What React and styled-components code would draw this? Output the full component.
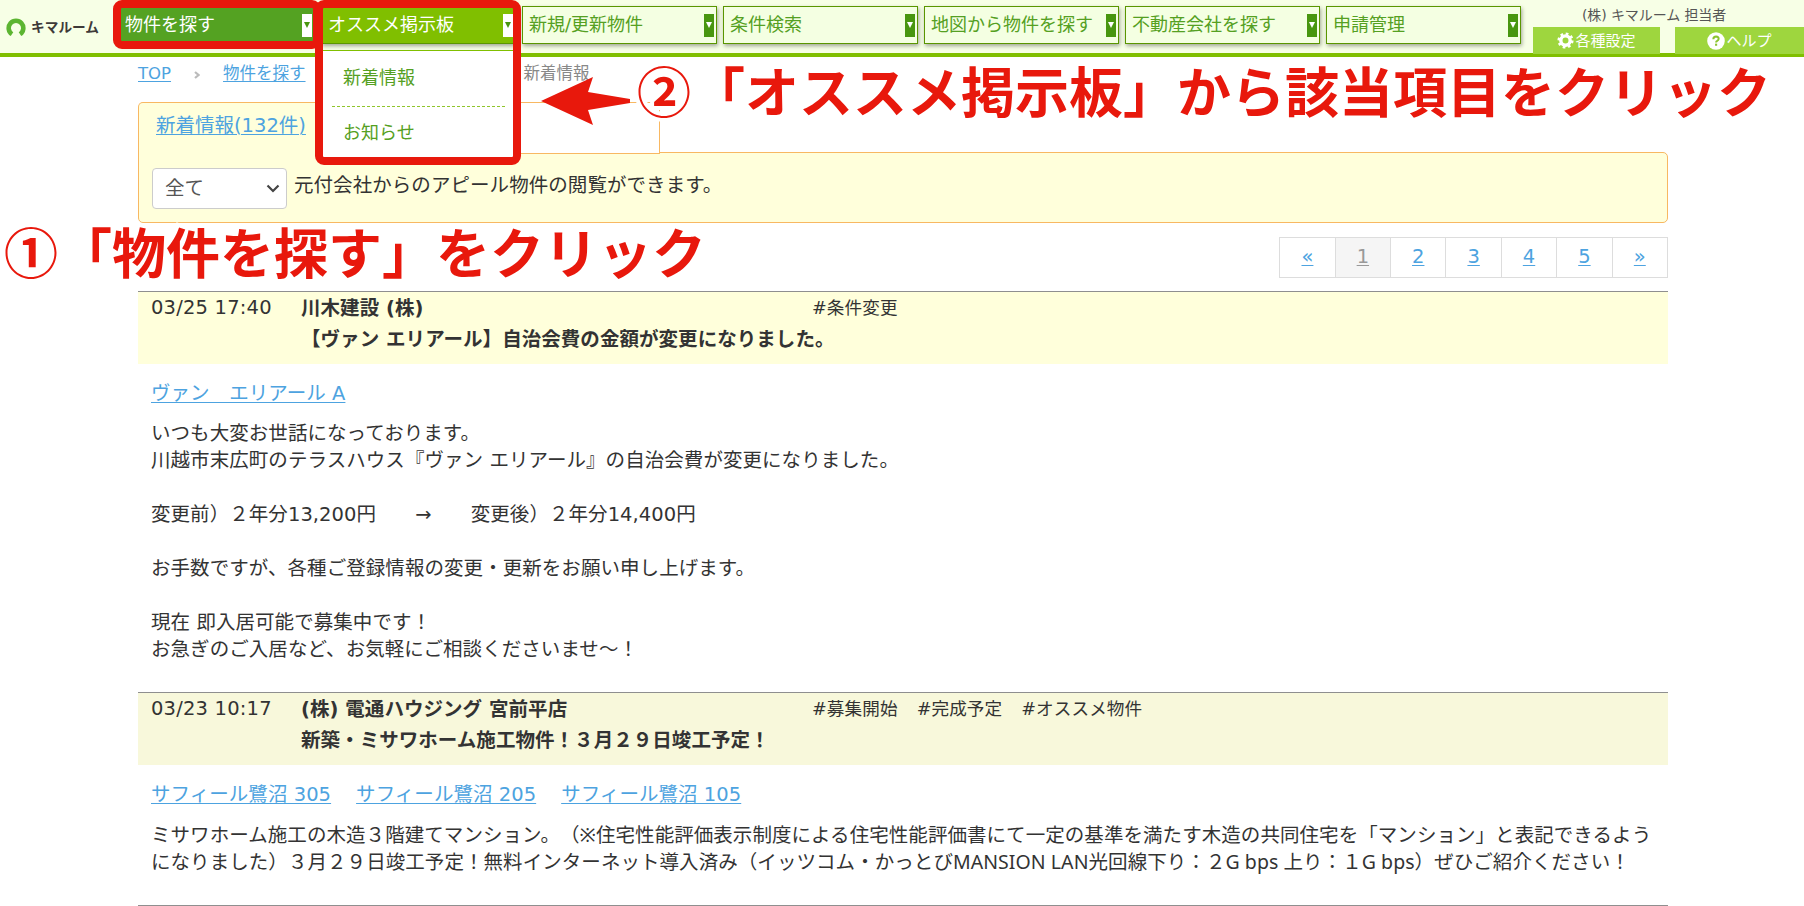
import React from "react";
import styled, { createGlobalStyle } from 'styled-components';


const GlobalStyle = createGlobalStyle`
* {
    box-sizing: border-box;
}
body {
    margin: 0;
    background-color: #fff;
    color: #333;
    font-family: 'DejaVu Sans', 'Noto Sans CJK JP', sans-serif;
    font-size: 19.5px;
    line-height: 27px;
    text-spacing-trim: space-all;
}
a {
    color: #4da3e0;
    text-decoration: underline;
    text-underline-offset: 2px;
    text-decoration-thickness: 1px;
}
p, h2, h3, ul {
    margin: 0;
    padding: 0;
}
`

const StyledPage = styled.div`
position: relative;
width: 1804px;
height: 906px;
overflow: hidden;
`

const StyledHeader = styled.header`
display: flex;
height: 57px;
background-color: #f7ffe6;
border-bottom: 4px solid #80bf00;
`

const Logo = styled.div`
display: flex;
align-items: center;
width: 120px;
height: 53px;
padding-left: 6px;

svg {
    margin-right: 5px;
}
span {
    font-family: 'Noto Sans CJK JP', sans-serif;
    font-size: 13.7px;
    font-weight: 700;
    color: #3e3a39;
}
`

const Nav = styled.nav`
display: flex;
gap: 6px;
padding-top: 6px;
`

const NavItem = styled.div`
position: relative;
display: flex;
align-items: center;
justify-content: space-between;
width: 195px;
height: 38px;
padding: 0 2px 0 6px;
border: 1px solid #5a9600;
background-color: ${props => props.$bg || '#f4ffe2'};
color: ${props => props.$bg ? '#fff' : '#55a022'};
box-shadow: 1px 2px 4px rgba(0, 0, 0, 0.35);
font-size: 18px;
white-space: nowrap;

&:first-child {
    padding-left: 4px;
}
`

const NavLabel = styled.span`
margin-top: -2px;
`

const NavArrow = styled.span`
display: flex;
align-items: center;
justify-content: center;
width: 10px;
height: 23px;
background-color: ${props => props.$open ? '#fff' : '#48960f'};

&::after {
    content: '';
    border: 3px solid transparent;
    border-top: 6px solid ${props => props.$open ? '#48960f' : '#fff'};
    border-bottom: 0;
}
`

const SubMenu = styled.ul`
position: absolute;
top: 43px;
left: 1px;
z-index: 2;
width: 193px;
height: 110px;
padding: 0 11px 0 9px;
border-top: 1px solid #80bf00;
background-color: #fff;
color: #55a022;
list-style: none;

li {
    height: 55px;
    padding-left: 11px;
    line-height: 53px;
}
li + li {
    line-height: 51px;
    border-top: 1px dashed #90c52c;
}
`

const UserArea = styled.div`
display: flex;
flex-direction: column;
width: 271px;
margin-left: 12px;
`

const UserName = styled.div`
height: 27px;
padding-left: 49px;
font-size: 14px;
letter-spacing: -0.1px;
line-height: 30px;
color: #555;
`

const UserButtons = styled.div`
display: flex;
gap: 15px;
`

const UserButton = styled.button`
display: flex;
align-items: center;
justify-content: center;
gap: 1px;
width: ${props => props.$width}px;
height: 27px;
padding: 0;
border: 0;
background-color: #9ed63e;
color: #fff;
font-family: inherit;
font-size: 15px;
line-height: 26px;
`

const Main = styled.main`
width: 1530px;
margin-left: 138px;
`

const Breadcrumb = styled.div`
display: flex;
align-items: center;
height: 45px;
padding-bottom: 13px;
font-size: 16.5px;

span {
    margin-left: 218px;
    color: #888;
}
svg {
    margin: 3px 23px 0;
}
`

const Tabs = styled.div`
display: flex;
height: 51px;
`

const Tab = styled.div`
width: ${props => props.$width}px;
height: ${props => props.$active ? 51 : 52}px;
padding: 9px 17px;
border: 1px solid #f8b862;
border-left-width: ${props => props.$active ? 1 : 0}px;
border-bottom-width: ${props => props.$active ? 0 : 1}px;
border-top-left-radius: ${props => props.$active ? 5 : 0}px;
background-color: ${props => props.$active ? '#ffffdb' : '#fff'};
position: relative;
z-index: 1;
white-space: nowrap;
`

const Panel = styled.div`
display: flex;
height: 71px;
margin-top: -1px;
padding: 15px 13px;
border: 1px solid #f8b862;
border-radius: 0 5px 5px 5px;
background-color: #ffffdb;
`

const SelectBox = styled.div`
display: flex;
align-items: center;
justify-content: space-between;
width: 135px;
height: 41px;
margin-right: 7px;
padding: 0 6px 0 12px;
border: 1px solid #ccc;
border-radius: 4px;
background-color: #fff;
color: #555;
`

const PanelText = styled.p`
padding-top: 4px;
letter-spacing: 0.06px;
`

const Pagination = styled.div`
display: flex;
justify-content: flex-end;
height: 68px;
padding-top: 14px;
`

const PageLink = styled.a`
width: 56.4px;
height: 41px;
margin-left: -1px;
border: 1px solid #ddd;
background-color: ${props => props.$current ? '#f5f5f5' : '#fff'};
color: ${props => props.$current ? '#999' : '#4da3e0'};
line-height: 37px;
text-align: center;
`

const Article = styled.article`
height: ${props => props.$height}px;
border-top: 1px solid #8f8f8f;
`

const ArticleHead = styled.div`
display: flex;
height: 72px;
padding: 1px 13px;
background-color: ${props => props.$bg};

h3 {
    width: 511px;
    font-size: 19.5px;
    font-weight: 700;
    line-height: 31px;
    letter-spacing: 0.05px;
    white-space: nowrap;
}
`

const ArticleDate = styled.div`
width: 150px;
line-height: 29px;
letter-spacing: 0.2px;
`

const Tags = styled.div`
display: flex;
gap: 19px;
font-size: 17.6px;
line-height: 31px;
letter-spacing: 0.1px;
`

const ArticleLinks = styled.div`
display: flex;
gap: 25px;
padding: 16px 13px 13px;
letter-spacing: 0.05px;
`

const ArticleText = styled.p`
padding: 0 13px;
font-family: ${props => props.$latin}, 'Noto Sans CJK JP', sans-serif;
letter-spacing: 0.06px;
white-space: pre;
`

const Note = styled.div`
position: absolute;
z-index: 4;
left: ${props => props.$x}px;
top: ${props => props.$y}px;
color: #e8180c;
font-family: 'Noto Sans CJK JP', sans-serif;
font-size: 54px;
font-weight: 700;
line-height: 60px;
white-space: nowrap;
-webkit-text-stroke: 8px #fff;
paint-order: stroke fill;
`

const RedFrame = styled.div`
position: absolute;
z-index: 3;
left: ${props => props.$x}px;
top: 0;
width: ${props => props.$w}px;
height: ${props => props.$h}px;
border: 8px solid #e8180c;
border-radius: 9px;
`

const NoteArrow = styled.svg`
position: absolute;
z-index: 5;
left: 541px;
top: 76px;
`

const navItems = [
    { label: '物件を探す', bg: '#54a222' },
    { label: 'オススメ掲示板', bg: '#80bf00', menu: ['新着情報', 'お知らせ'] },
    { label: '新規/更新物件' },
    { label: '条件検索' },
    { label: '地図から物件を探す' },
    { label: '不動産会社を探す' },
    { label: '申請管理' },
]

const articles = [
    {
        date: '03/25 17:40',
        company: '川木建設 (株)',
        title: '【ヴァン エリアール】自治会費の金額が変更になりました。',
        tags: ['#条件変更'],
        links: ['ヴァン　エリアール A'],
        text: `いつも大変お世話になっております。
川越市末広町のテラスハウス『ヴァン エリアール』の自治会費が変更になりました。

変更前）２年分13,200円　　→　　変更後）２年分14,400円

お手数ですが、各種ご登録情報の変更・更新をお願い申し上げます。

現在 即入居可能で募集中です！
お急ぎのご入居など、お気軽にご相談くださいませ～！`,
        latin: "'DejaVu Sans'",
        bg: '#ffffdb',
        height: 401,
    },
    {
        date: '03/23 10:17',
        company: '(株) 電通ハウジング 宮前平店',
        title: '新築・ミサワホーム施工物件！３月２９日竣工予定！',
        tags: ['#募集開始', '#完成予定', '#オススメ物件'],
        links: ['サフィール鷺沼 305', 'サフィール鷺沼 205', 'サフィール鷺沼 105'],
        text: `ミサワホーム施工の木造３階建てマンション。（※住宅性能評価表示制度による住宅性能評価書にて一定の基準を満たす木造の共同住宅を「マンション」と表記できるよう
になりました）３月２９日竣工予定！無料インターネット導入済み（イッツコム・かっとびMANSION LAN光回線下り：２G bps 上り：１G bps）ぜひご紹介ください！`,
        latin: "'Noto Sans'",
        bg: '#f8f8db',
        height: 213,
    },
]


function Crumb() {
    return (
        <svg width="6" height="8" viewBox="0 0 6 8">
            <path d="M1 1 L4.5 4 L1 7" fill="none" stroke="#bbb" strokeWidth="2.2" />
        </svg>
    )
}

function Header() {
    return (
    <StyledHeader>
        <Logo>
            <svg width="20" height="20" viewBox="0 0 20 20">
                <path d="M6 17.2 A7.3 7.3 0 1 1 14 17.2" fill="none" stroke="#5cb531" strokeWidth="4.6" />
            </svg>
            <span>キマルーム</span>
        </Logo>
        <Nav>
            {navItems.map(item => (
                <NavItem key={item.label} $bg={item.bg}>
                    <NavLabel>{item.label}</NavLabel>
                    <NavArrow $open={!!item.bg} />
                    {item.menu && (
                        <SubMenu>
                            {item.menu.map(name => <li key={name}>{name}</li>)}
                        </SubMenu>
                    )}
                </NavItem>
            ))}
        </Nav>
        <UserArea>
            <UserName>(株) キマルーム 担当者</UserName>
            <UserButtons>
                <UserButton $width={127}>
                    <svg width="17" height="17" viewBox="0 0 16 16">
                        <circle cx="8" cy="8" r="4.4" fill="none" stroke="#fff" strokeWidth="3.2" />
                        <circle cx="8" cy="8" r="6.4" fill="none" stroke="#fff" strokeWidth="2.4" strokeDasharray="2.5 2.53" />
                    </svg>
                    各種設定
                </UserButton>
                <UserButton $width={129}>
                    <svg width="18" height="18" viewBox="0 0 17 17">
                        <circle cx="8.5" cy="8.5" r="8.3" fill="#fff" />
                        <path d="M6 6.8 Q6 4.3 8.6 4.3 Q11.1 4.4 11 6.6 Q10.9 7.7 9.6 8.4 Q8.6 8.9 8.6 10" fill="none" stroke="#8bc430" strokeWidth="1.9" />
                        <rect x="7.6" y="11" width="2" height="2" fill="#8bc430" />
                    </svg>
                    ヘルプ
                </UserButton>
            </UserButtons>
        </UserArea>
    </StyledHeader>
    )
}

function Post(props) {
    const { date, company, title, tags, links, text, latin, bg, height } = props.article;

    return (
    <Article $height={height}>
        <ArticleHead $bg={bg}>
            <ArticleDate>{date}</ArticleDate>
            <h3>{company}<br />{title}</h3>
            <Tags>
                {tags.map(tag => <span key={tag}>{tag}</span>)}
            </Tags>
        </ArticleHead>
        <ArticleLinks>
            {links.map(link => <a key={link}>{link}</a>)}
        </ArticleLinks>
        <ArticleText $latin={latin}>{text}</ArticleText>
    </Article>
    )
}

function App() {
    return (
    <StyledPage>
        <GlobalStyle />
        <Header />
        <Main>
            <Breadcrumb>
                <a>TOP</a>
                <Crumb />
                <a>物件を探す</a>
                <span>新着情報</span>
            </Breadcrumb>
            <Tabs>
                <Tab $active $width={261}><a>新着情報(132件)</a></Tab>
                <Tab $width={261} />
            </Tabs>
            <Panel>
                <SelectBox>
                    全て
                    <svg width="14" height="9" viewBox="0 0 14 9">
                        <path d="M1.5 1.5 L7 7 L12.5 1.5" fill="none" stroke="#444" strokeWidth="2.2" />
                    </svg>
                </SelectBox>
                <PanelText>元付会社からのアピール物件の閲覧ができます。</PanelText>
            </Panel>
            <Pagination>
                {['«', '1', '2', '3', '4', '5', '»'].map(page => (
                    <PageLink key={page} $current={page === '1'}>{page}</PageLink>
                ))}
            </Pagination>
            {articles.map(article => <Post key={article.date} article={article} />)}
            <Article $height={1} />
        </Main>

        <RedFrame $x={113} $w={208} $h={49} />
        <RedFrame $x={315} $w={206} $h={165} />
        <NoteArrow width="90" height="50" viewBox="0 0 90 50">
            <path d="M0 25 L52 1 L47 16 L89 23 V27 L47 34 L52 49 Z" fill="#e8180c" />
        </NoteArrow>
        <Note $x={4} $y={221}>①「物件を探す」をクリック</Note>
        <Note $x={637} $y={60}>②「オススメ掲示板」から該当項目をクリック</Note>
    </StyledPage>
    )
}

export default App;
